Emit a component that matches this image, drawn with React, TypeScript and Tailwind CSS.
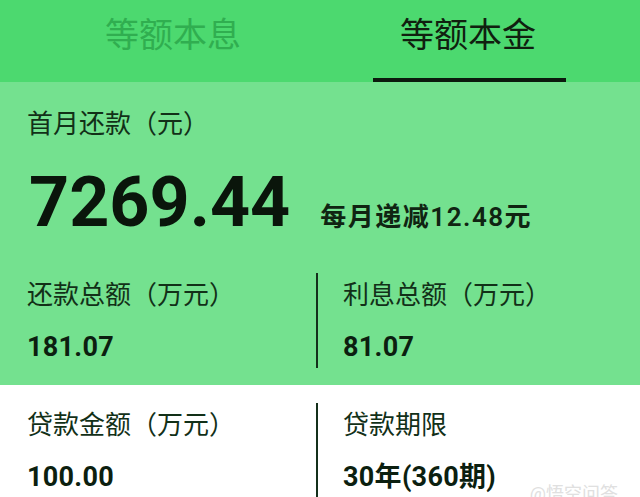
const font = { fontFamily: 'Roboto, "Noto Sans CJK SC", sans-serif' };

function Stat({ label, value, divider }: { label: string; value: string; divider?: boolean }) {
  return (
    <div
      className={
        divider
          ? "flex-1 border-l-2 border-[#14301b] pl-[25px] pt-[9px] pb-[7px]"
          : "w-[316px] shrink-0 pl-[27px] pt-[9px] pb-[7px]"
      }
    >
      <p className="text-[26px] leading-[26px] text-[#123018]">{label}</p>
      <p className="mt-[26px] text-[27px] font-bold leading-[27px] tracking-[0.3px] text-[#0c1f10]">
        {value}
      </p>
    </div>
  );
}

export default function App() {
  return (
    <div className="relative h-[497px] w-[640px] overflow-hidden bg-white" style={font}>
      <div className="flex h-[82px] bg-[#4cd96f]">
        <div className="ml-[25px] flex w-[296px] flex-col items-center pt-[18px]">
          <span className="text-[34px] leading-[34px] text-[#30ae50]">等额本息</span>
        </div>
        <div className="flex w-[297px] flex-col items-center pt-[18px]">
          <span className="pr-[3px] text-[34px] leading-[34px] text-[#10200f]">等额本金</span>
          <div className="mt-auto h-[4px] w-[193px] bg-[#0c1a0e]" />
        </div>
      </div>

      <div className="bg-[#74e18f] pb-[17px] pt-[29px]">
        <p className="pl-[27px] text-[26px] leading-[26px] text-[#123018]">首月还款（元）</p>
        <div className="mt-[29px] flex items-baseline pl-[29px]">
          <span className="text-[70px] font-bold leading-[72px] text-[#0a150b]">7269.44</span>
          <span className="ml-[30px] text-[26px] font-semibold leading-[26px] tracking-[1.5px] text-[#102412]">
            每月递减12.48元
          </span>
        </div>
        <div className="mt-[35px] flex">
          <Stat label="还款总额（万元）" value="181.07" />
          <Stat label="利息总额（万元）" value="81.07" divider />
        </div>
      </div>

      <div className="mt-[18px] flex">
        <Stat label="贷款金额（万元）" value="100.00" />
        <Stat label="贷款期限" value="30年(360期)" divider />
      </div>

      <span className="absolute bottom-[-6px] right-[22px] text-[18px] leading-[18px] text-[#e0e0e0]">
        @悟空问答
      </span>
    </div>
  );
}
